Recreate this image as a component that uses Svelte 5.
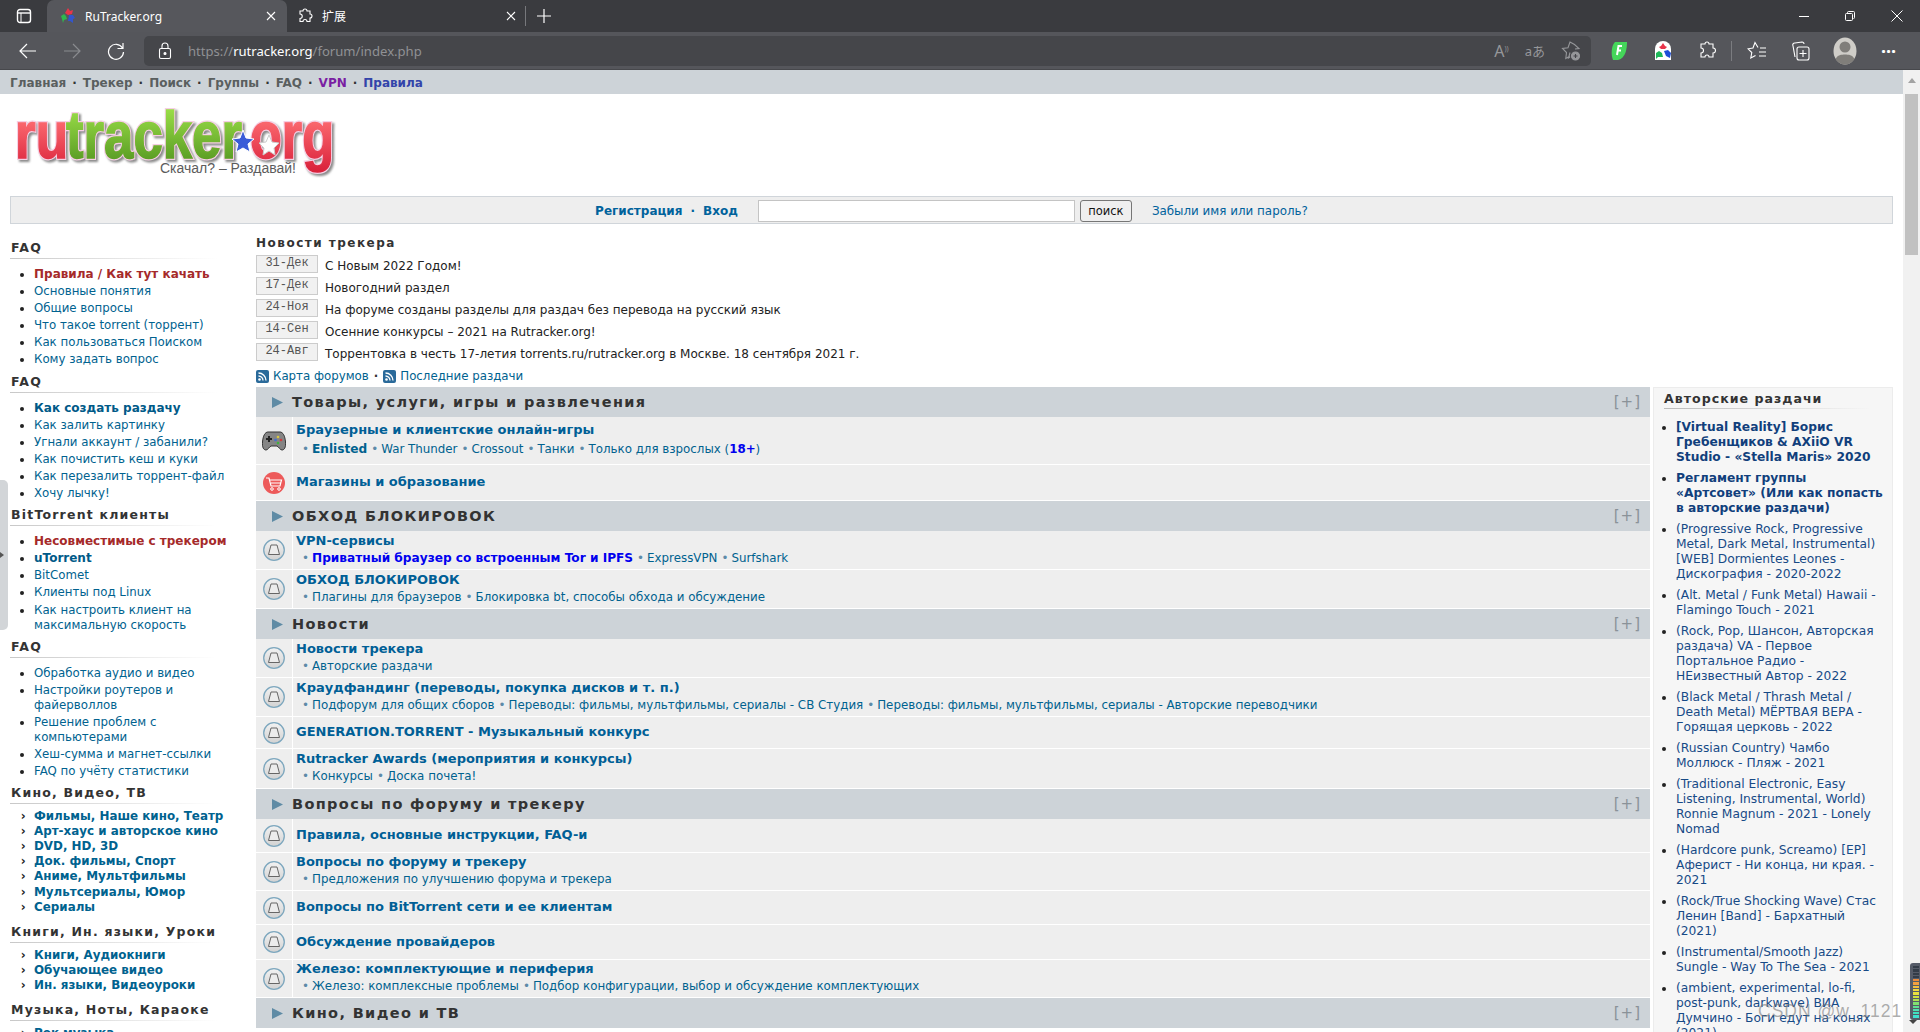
<script>
  const side = [
    { h: 'FAQ', items: [
      { t: 'Правила / Как тут качать', c: 'red' }, { t: 'Основные понятия' }, { t: 'Общие вопросы' },
      { t: 'Что такое torrent (торрент)' }, { t: 'Как пользоваться Поиском' }, { t: 'Кому задать вопрос' } ] },
    { h: 'FAQ', items: [
      { t: 'Как создать раздачу', c: 'b' }, { t: 'Как залить картинку' }, { t: 'Угнали аккаунт / забанили?' },
      { t: 'Как почистить кеш и куки' }, { t: 'Как перезалить торрент-файл' }, { t: 'Хочу лычку!' } ] },
    { h: 'BitTorrent клиенты', items: [
      { t: 'Несовместимые с трекером', c: 'red' }, { t: 'uTorrent', c: 'b' }, { t: 'BitComet' },
      { t: 'Клиенты под Linux' }, { t: 'Как настроить клиент на\nмаксимальную скорость' } ] },
    { h: 'FAQ', items: [
      { t: 'Обработка аудио и видео' }, { t: 'Настройки роутеров и\nфайерволлов' }, { t: 'Решение проблем с\nкомпьютерами' },
      { t: 'Хеш-сумма и магнет-ссылки' }, { t: 'FAQ по учёту статистики' } ] },
    { h: 'Кино, Видео, ТВ', cat: true, items: ['Фильмы, Наше кино, Театр', 'Арт-хаус и авторское кино', 'DVD, HD, 3D', 'Док. фильмы, Спорт', 'Аниме, Мультфильмы', 'Мультсериалы, Юмор', 'Сериалы'].map(t => ({ t })) },
    { h: 'Книги, Ин. языки, Уроки', cat: true, items: ['Книги, Аудиокниги', 'Обучающее видео', 'Ин. языки, Видеоуроки'].map(t => ({ t })) },
    { h: 'Музыка, Ноты, Караоке', cat: true, items: ['Рок музыка'].map(t => ({ t })) }
  ];

  const news = [
    ['31-Дек', 'С Новым 2022 Годом!'], ['17-Дек', 'Новогодний раздел'],
    ['24-Ноя', 'На форуме созданы разделы для раздач без перевода на русский язык'],
    ['14-Сен', 'Осенние конкурсы – 2021 на Rutracker.org!'],
    ['24-Авг', 'Торрентовка в честь 17-летия torrents.ru/rutracker.org в Москве. 18 сентября 2021 г.']
  ];

  const cats = [
    { h: 'Товары, услуги, игры и развлечения', rows: [
      { i: 'game', t: 'Браузерные и клиентские онлайн-игры', h: 47, g: 1, s: [{ t: 'Enlisted', b: 1 }, { t: 'War Thunder' }, { t: 'Crossout' }, { t: 'Танки' }, { t: 'Только для взрослых (', x: '18+' }] },
      { i: 'cart', t: 'Магазины и образование', h: 35 } ] },
    { h: 'ОБХОД БЛОКИРОВОК', rows: [
      { t: 'VPN-сервисы', h: 38, s: [{ t: 'Приватный браузер со встроенным Tor и IPFS', v: 1 }, { t: 'ExpressVPN' }, { t: 'Surfshark' }] },
      { t: 'ОБХОД БЛОКИРОВОК', h: 38, s: [{ t: 'Плагины для браузеров' }, { t: 'Блокировка bt, способы обхода и обсуждение' }] } ] },
    { h: 'Новости', rows: [
      { t: 'Новости трекера', h: 38, s: [{ t: 'Авторские раздачи' }] },
      { t: 'Краудфандинг (переводы, покупка дисков и т. п.)', h: 38, s: [{ t: 'Подфорум для общих сборов' }, { t: 'Переводы: фильмы, мультфильмы, сериалы - СВ Студия' }, { t: 'Переводы: фильмы, мультфильмы, сериалы - Авторские переводчики' }] },
      { t: 'GENERATION.TORRENT - Музыкальный конкурс', h: 31 },
      { t: 'Rutracker Awards (мероприятия и конкурсы)', h: 39, s: [{ t: 'Конкурсы' }, { t: 'Доска почета!' }] } ] },
    { h: 'Вопросы по форуму и трекеру', rows: [
      { t: 'Правила, основные инструкции, FAQ-и', h: 33 },
      { t: 'Вопросы по форуму и трекеру', h: 37, s: [{ t: 'Предложения по улучшению форума и трекера' }] },
      { t: 'Вопросы по BitTorrent сети и ее клиентам', h: 33 },
      { t: 'Обсуждение провайдеров', h: 34 },
      { t: 'Железо: комплектующие и периферия', h: 37, s: [{ t: 'Железо: комплексные проблемы' }, { t: 'Подбор конфигурации, выбор и обсуждение комплектующих' }] } ] },
    { h: 'Кино, Видео и ТВ', rows: [] }
  ];

  const authors = [
    { b: 1, t: '[Virtual Reality] Борис\nГребенщиков & AXiiO VR\nStudio - «Stella Maris» 2020' },
    { b: 1, t: 'Регламент группы\n«Артсовет» (Или как попасть\nв авторские раздачи)' },
    { t: '(Progressive Rock, Progressive\nMetal, Dark Metal, Instrumental)\n[WEB] Dormientes Leones -\nДискография - 2020-2022' },
    { t: '(Alt. Metal / Funk Metal) Hawaii -\nFlamingo Touch - 2021' },
    { t: '(Rock, Pop, Шансон, Авторская\nраздача) VA - Первое\nПортальное Радио -\nНЕизвестный Автор - 2022' },
    { t: '(Black Metal / Thrash Metal /\nDeath Metal) МЁРТВАЯ ВЕРА -\nГорящая церковь - 2022' },
    { t: '(Russian Country) Чамбо\nМоллюск - Пляж - 2021' },
    { t: '(Traditional Electronic, Easy\nListening, Instrumental, World)\nRonnie Magnum - 2021 - Lonely\nNomad' },
    { t: '(Hardcore punk, Screamo) [EP]\nАферист - Ни конца, ни края. -\n2021' },
    { t: '(Rock/True Shocking Wave) Стас\nЛенин [Band] - Бархатный\n(2021)' },
    { t: '(Instrumental/Smooth Jazz)\nSungle - Way To The Sea - 2021' },
    { t: '(ambient, experimental, lo-fi,\npost-punk, darkwave) ВИА\nДумчино - Боги едут на конях\n(2021)' }
  ];
  const meter = ['#333c48','#333c48','#333c48','#333c48','#e98a3c','#f0a040','#f0c040','#f0d840','#e8e040','#d0e040','#b0e050','#80e070','#60e090','#50e0b0','#40e0c0','#40e0d0'];
</script>

<div class="screen">
  <header class="chrome">
    <div class="tabs">
      <svg class="tabmenu" width="16" height="16" viewBox="0 0 16 16" fill="none" stroke="#fff" stroke-width="1.4"><rect x="1.500" y="1.500" width="13" height="13" rx="2.500"/><path d="M1.500 5h13" /><path d="M5 5v9" stroke-width="1"/></svg>
      <div class="tab active">
        <svg width="16" height="16" viewBox="0 0 16 16"><path d="M8 0l2 3 3-1-1 4-4 1-3-2z" fill="#e8344a"/><path d="M1 8l3-2 2 2 1 3-3 1-1 3-1-4z" fill="#2fb84d"/><path d="M9 7l4 0 2 3-2 1 0 4-3-2-2 0z" fill="#3355cc"/></svg>
        <span class="tabtitle">RuTracker.org</span>
        <svg class="x" width="10" height="10" viewBox="0 0 10 10" stroke="#fff" stroke-width="1.1"><path d="M1 1l8 8M9 1l-8 8"/></svg>
      </div>
      <div class="tab">
        <svg width="16" height="16" viewBox="0 0 16 16" fill="none" stroke="#fff" stroke-width="1.1"><path d="M6 3a2 2 0 0 1 4 0h3v3a2 2 0 0 1 0 4v3.500h-3a2 2 0 0 0-4 0H3v-3a2 2 0 0 0 0-4.500V3z"/></svg>
        <span class="tabtitle cjk">扩展</span>
        <svg class="x" width="10" height="10" viewBox="0 0 10 10" stroke="#fff" stroke-width="1.1"><path d="M1 1l8 8M9 1l-8 8"/></svg>
      </div>
      <span class="tabsep"></span>
      <svg width="14" height="14" viewBox="0 0 14 14" stroke="#fff" stroke-width="1.2"><path d="M7 0v14M0 7h14"/></svg>
      <div class="winctl">
        <svg width="10" height="10" viewBox="0 0 10 10" stroke="#fff"><path d="M0 5.500h10"/></svg>
        <svg width="10" height="10" viewBox="0 0 10 10" stroke="#fff" fill="none"><rect x=".5" y="2.500" width="7" height="7" rx="1"/><path d="M2.500 2.500V1.500a1 1 0 0 1 1-1h5a1 1 0 0 1 1 1v5a1 1 0 0 1-1 1"/></svg>
        <svg width="12" height="12" viewBox="0 0 12 12" stroke="#fff"><path d="M.5.500l11 11M11.500.500l-11 11"/></svg>
      </div>
    </div>
    <div class="toolbar">
      <div class="navbtns">
        <svg width="18" height="18" viewBox="0 0 18 18" fill="none" stroke="#fff" stroke-width="1.2"><path d="M17 9H1M8 2L1 9l7 7"/></svg>
        <svg width="18" height="18" viewBox="0 0 18 18" fill="none" stroke="#8a8b8f" stroke-width="1.2"><path d="M1 9h16M10 2l7 7-7 7"/></svg>
        <svg width="18" height="18" viewBox="0 0 18 18" fill="none" stroke="#fff" stroke-width="1.2"><path d="M15.500 6A7.500 7.500 0 1 0 16.500 10M16 1v5.500h-5.500"/></svg>
      </div>
      <div class="address">
        <svg width="14" height="18" viewBox="0 0 14 18" fill="none" stroke="#fff" stroke-width="1.100"><rect x="1.500" y="6.500" width="11" height="10" rx="1.500"/><path d="M4 6.500V4a3 3 0 0 1 6 0v2.500"/><circle cx="7" cy="11.500" r="1" fill="#fff"/></svg>
        <span class="url"><span class="dim">https://</span>rutracker.org<span class="dim">/forum/index.php</span></span>
        <div class="addr-icons">
          <span class="readaloud">A<small>))</small></span>
          <span class="translate">aあ</span>
          <svg width="20" height="20" viewBox="0 0 20 20" fill="none" stroke="#96979a" stroke-width="1.100"><path d="M9 11.500L7.500 17 9 16M14 8l4-.5-4.500-4L9 1 7 6.800 1.500 7.500 5.500 11.500 4.800 17.500 9 15"/><circle cx="14.500" cy="15" r="4" fill="#96979a"/><path d="M14.500 13v4M12.500 15h4" stroke="#45464a"/></svg>
        </div>
      </div>
      <div class="extbar">
        <svg class="ext" width="18" height="20" viewBox="0 0 18 20"><path d="M5 1h12c0 6-1 16-9 18H3C1 14 1 5 5 1z" fill="#45d65a"/><path d="M12 5H8.500L7 14M7 9.500h4" stroke="#fff" stroke-width="2" fill="none"/></svg>
        <svg class="ext" width="18" height="20" viewBox="0 0 18 20"><path d="M1 8a8 8 0 0 1 16 0v11H1z" fill="#fff"/><path d="M9 2l2 3 2 1-2 2H7L5 6l2-1z" fill="#e8344a"/><path d="M2 12l3-2 3 2 1 4H4l-2 2z" fill="#1fb85a"/><path d="M10 10l4-1 3 3-1 5-4-2z" fill="#1d4ed8"/></svg>
        <svg width="18" height="20" viewBox="0 0 18 20" fill="none" stroke="#fff" stroke-width="1.100"><path d="M7 3a2 2 0 0 1 4 0h4v4a2.500 2.500 0 0 1 0 5v4h-4a2 2 0 0 0-4 0H3v-4a2.500 2.500 0 0 0 0-5V3z"/></svg>
        <span class="vsep"></span>
        <svg class="fav" width="20" height="20" viewBox="0 0 20 20" fill="none" stroke="#fff" stroke-width="1.100"><path d="M11 6.500L8 1.500 6 7 1 7.800l3.800 3.700-1 5.500 4.700-2.500M13 7h6M12 11h7M12 15h7"/></svg>
        <svg class="coll" width="20" height="20" viewBox="0 0 20 20" fill="none" stroke="#fff" stroke-width="1.100"><rect x="7" y="6" width="12" height="13" rx="2"/><path d="M13 9v7M9.500 12.500h7M5 16L3 5a2 2 0 0 1 2-3l7-1a2 2 0 0 1 2 2"/></svg>
        <svg class="avatar" width="24" height="28" viewBox="0 0 24 28"><ellipse cx="12" cy="14" rx="11.500" ry="13.500" fill="#cfcdc8"/><circle cx="12" cy="10" r="5.500" fill="#807e7a"/><path d="M2.500 22c2-4 6-4.500 9.500-4.500s7.500.5 9.500 4.500c-2 3.500-5.500 5.500-9.500 5.500s-7.500-2-9.500-5.500z" fill="#807e7a"/></svg>
        <span class="dots">···</span>
      </div>
    </div>
  </header>

  <div class="viewport">
    <main class="page">
      <nav class="topnav">
        <span>Главная</span><i>·</i><span>Трекер</span><i>·</i><span>Поиск</span><i>·</i><span>Группы</span><i>·</i><span>FAQ</span><i>·</i><span class="vpn">VPN</span><i>·</i><span class="rules">Правила</span>
      </nav>

      <div class="logo">
        <svg width="340" height="76" viewBox="0 0 340 76">
          <defs>
            <linearGradient id="lr" x1="0" y1="0" x2="0" y2="1"><stop offset="0.35" stop-color="#f9656c"/><stop offset="1" stop-color="#d9203a"/></linearGradient>
            <linearGradient id="lg" x1="0" y1="0" x2="0" y2="1"><stop offset="0" stop-color="#a8ec50"/><stop offset="1" stop-color="#4d8f1c"/></linearGradient>
          </defs>
          <g class="logotext halo">
            <text x="15" y="52" textLength="53" lengthAdjust="spacingAndGlyphs">ru</text>
            <text x="66" y="52" textLength="176" lengthAdjust="spacingAndGlyphs">tracker</text>
            <text x="250" y="52" textLength="84" lengthAdjust="spacingAndGlyphs">org</text>
          </g>
          <g class="logotext">
            <text x="15" y="52" textLength="53" lengthAdjust="spacingAndGlyphs" fill="url(#lr)" stroke="url(#lr)">ru</text>
            <text x="66" y="52" textLength="176" lengthAdjust="spacingAndGlyphs" fill="url(#lg)" stroke="url(#lg)">tracker</text>
            <text x="250" y="52" textLength="84" lengthAdjust="spacingAndGlyphs" fill="url(#lr)" stroke="url(#lr)">org</text>
          </g>
          <polygon points="243,24 246,32 254,33 248,38 250,46 243,42 236,46 238,38 232,33 240,32" fill="#3a5cd8" stroke="#fff"/>
          <polygon points="269,29 272,36 279,37 274,42 275,49 269,45 263,49 264,42 259,37 266,36" fill="#fff" stroke="#ccc"/>
          <text class="tagline" x="160" y="67">Скачал? – Раздавай!</text>
        </svg>
      </div>

      <div class="loginbar">
        <b class="reg">Регистрация</b><i class="ldot">·</i><b class="reg">Вход</b>
        <input class="search" type="text" />
        <button class="go">поиск</button>
        <span class="forgot">Забыли имя или пароль?</span>
      </div>

      <div class="columns">
        <aside class="sidebar">
          {#each side as s}
            <section class="sblock" class:cat={s.cat}>
              <h3>{s.h}</h3>
              <ul>
                {#each s.items as it}
                  <li class={it.c || ''}>{it.t}</li>
                {/each}
              </ul>
            </section>
          {/each}
        </aside>

        <div class="center">
          <div class="newstitle">Новости трекера</div>
          <div class="news">
            {#each news as n}
              <div class="newsrow"><span class="date">{n[0]}</span><span class="ntext">{n[1]}</span></div>
            {/each}
          </div>
          <div class="feeds">
            <svg width="13" height="13" viewBox="0 0 13 13"><rect width="13" height="13" rx="2" fill="#2a6a9a"/><circle cx="3.500" cy="9.500" r="1.300" fill="#fff"/><path d="M2.500 6a4.500 4.500 0 0 1 4.500 4.500M2.500 3a7.500 7.500 0 0 1 7.500 7.500" stroke="#fff" stroke-width="1.300" fill="none"/></svg>
            <span>Карта форумов</span>
            <i>·</i>
            <svg width="13" height="13" viewBox="0 0 13 13"><rect width="13" height="13" rx="2" fill="#2a6a9a"/><circle cx="3.500" cy="9.500" r="1.300" fill="#fff"/><path d="M2.500 6a4.500 4.500 0 0 1 4.500 4.500M2.500 3a7.500 7.500 0 0 1 7.500 7.500" stroke="#fff" stroke-width="1.300" fill="none"/></svg>
            <span>Последние раздачи</span>
          </div>

          <div class="forumwrap">
            <div class="forums">
              {#each cats as c}
                <div class="cathead">
                  <svg width="11" height="11" viewBox="0 0 11 11"><path d="M0 0l11 5.500L0 11z" fill="#5f8ba5"/></svg>
                  <span class="catname">{c.h}</span>
                  <span class="plus">[+]</span>
                </div>
                {#each c.rows as r}
                  <div class="row" style="min-height:{r.h}px">
                    <div class="ico">
                      {#if r.i === 'game'}
                        <svg width="24" height="20" viewBox="0 0 24 20"><path d="M6 1h12c3 0 5 4 5.500 10 .5 5-1 8-3.500 8-2 0-3-3-5-4H9c-2 1-3 4-5 4-2.500 0-4-3-3.500-8C1 5 3 1 6 1z" fill="#858585" stroke="#333"/><path d="M7 5v6M4 8h6" stroke="#222" stroke-width="2"/><circle cx="16" cy="6" r="1.300" fill="#d8c840"/><circle cx="19" cy="9" r="1.300" fill="#d04040"/><circle cx="13.500" cy="9" r="1.300" fill="#4070d0"/><circle cx="16" cy="12" r="1.300" fill="#40b040"/></svg>
                      {:else if r.i === 'cart'}
                        <svg width="22" height="22" viewBox="0 0 22 22"><circle cx="11" cy="11" r="11" fill="#ed5a5a"/><path d="M3 6h3l2 8h9l1.500-6H6.500M8 11h10" fill="none" stroke="#fff" stroke-width="1.200"/><circle cx="9" cy="17" r="1.300" fill="none" stroke="#fff"/><circle cx="16" cy="17" r="1.300" fill="none" stroke="#fff"/></svg>
                      {:else}
                        <svg width="22" height="22" viewBox="0 0 22 22"><defs><linearGradient id="fi" x1="0" y1="0" x2="0" y2="1"><stop offset="0" stop-color="#f2f2f2"/><stop offset="1" stop-color="#d2d2d2"/></linearGradient></defs><circle cx="11" cy="11" r="10.300" fill="url(#fi)" stroke="#7da7be" stroke-width="1.300"/><path d="M8 6h6l2.500 9.500h-11z" fill="#ececec" stroke="#666" stroke-width="1" stroke-linejoin="round"/></svg>
                      {/if}
                    </div>
                    <div class="rowbody" class:wide={r.g}>
                      <div class="rtitle">{r.t}</div>
                      {#if r.s}
                        <div class="rsub">
                          {#each r.s as l}
                            <span class="bul">•</span><span class:sb={l.b} class:sv={l.v}>{l.t}{#if l.x}<b class="plus18">{l.x}</b>){/if}</span>
                          {/each}
                        </div>
                      {/if}
                    </div>
                  </div>
                {/each}
              {/each}
            </div>
            <aside class="authors">
              <h4>Авторские раздачи</h4>
              <ul>
                {#each authors as a}
                  <li class:bold={a.b}>{a.t}</li>
                {/each}
              </ul>
            </aside>
          </div>
        </div>
      </div>
    </main>

    <div class="scrollbar">
      <span class="arrow"></span>
      <span class="thumb"></span>
    </div>

    <div class="handle"><span></span></div>
    <div class="watermark">CSDN @w_1121</div>
    <div class="meter">
      {#each meter as m}<span style="background:{m}"></span>{/each}
    </div>
  </div>
</div>

<style>
  :global(body) { margin: 0; background: #fff; }
  .screen { width: 1920px; height: 1032px; overflow: hidden; display: flex; flex-direction: column; font-family: "DejaVu Sans", sans-serif; }

  .chrome { height: 70px; flex: none; background: #55565b; font-family: "Noto Sans", "Noto Sans CJK SC", sans-serif; color: #fff; }
  .tabs { height: 32px; background: #3a3b3f; display: flex; align-items: center; }
  .tabmenu { margin: 0 15px 0 16px; }
  .tab { width: 240px; height: 32px; box-sizing: border-box; display: flex; align-items: center; padding: 0 11px 0 13px; gap: 9px; border-radius: 7px 7px 0 0; }
  .tab.active { background: #56575c; }
  .tab + .tab { padding-left: 10px; }
  .tabtitle { flex: 1; font-size: 12px; }
  .tabsep { width: 1px; height: 20px; background: #77787c; margin: 0 11px 0 -2px; }
  .winctl { margin-left: auto; display: flex; align-items: center; gap: 36px; padding-right: 17px; }
  .toolbar { height: 38px; display: flex; align-items: center; border-bottom: 1px solid #47484c; box-sizing: border-box; }
  .navbtns { width: 144px; flex: none; display: flex; gap: 26px; padding-left: 19px; box-sizing: border-box; }
  .address { width: 1447px; height: 30px; flex: none; background: #45464a; border-radius: 5px; display: flex; align-items: center; padding: 0 10px 0 14px; box-sizing: border-box; }
  .url { font-size: 13.100px; margin-left: 16px; color: #fff; }
  .dim { color: #909194; }
  .addr-icons { margin-left: auto; display: flex; align-items: center; gap: 16px; color: #96979a; font-size: 16px; }
  .readaloud small { font-size: 7px; vertical-align: 6px; }
  .translate { font-size: 13px; }
  .extbar { flex: 1; display: flex; align-items: center; padding-left: 19px; gap: 24px; }
  .ext { margin-right: 2px; }
  .vsep { width: 1px; height: 20px; background: #7b7c80; margin: 0 -9px; }
  .fav { margin-right: -1px; }
  .coll { margin-right: -1px; }
  .dots { font-size: 18px; font-weight: 700; }

  .viewport { flex: 1; position: relative; display: flex; min-height: 0; overflow: hidden; }
  .page { flex: 1; min-width: 0; overflow: hidden; }
  .scrollbar { width: 17px; flex: none; background: #f1f1f1; display: flex; flex-direction: column; align-items: center; }
  .arrow { margin-top: 8px; border: 4px solid transparent; border-top: 0; border-bottom: 5px solid #a3a3a3; }
  .thumb { width: 13px; height: 161px; margin-top: 11px; background: #c1c1c1; }

  .topnav { height: 24px; box-sizing: border-box; padding: 1px 0 0 10px; background: #cdd3d8; display: flex; align-items: center; font-size: 12px; font-weight: 700; color: #5a5f5f; }
  .topnav i { font-style: normal; margin: 0 6px; color: #333; }
  .vpn { color: #7a1fa2; }
  .rules { color: #3344aa; }

  .logo { height: 102px; box-sizing: border-box; padding: 12px 0 0 0; }
  .logotext { font: 700 67px "Liberation Sans", sans-serif; stroke-width: 1.500; }
  .logotext.halo { fill: #f6cfe4; stroke: #f6cfe4; stroke-width: 4; filter: drop-shadow(2px 2px 1px rgba(60,60,60,.6)); }
  .tagline { font: 14px "Liberation Sans", sans-serif; fill: #5c5c5c; }

  .loginbar { margin: 0 10px; height: 28px; box-sizing: border-box; padding-top: 1px; background: #eee; border: 1px solid #d0d5da; display: flex; align-items: center; justify-content: center; font-size: 12px; color: #00629c; }
  .reg { font-weight: 700; }
  .ldot { font-style: normal; margin: 0 8px; font-weight: 700; }
  .search { width: 317px; height: 22px; box-sizing: border-box; border: 1px solid #c4c4c4; background: #fff; margin: 0 5px 0 20px; padding: 0; }
  .go { width: 52px; height: 22px; box-sizing: border-box; border: 1px solid #767676; border-radius: 3px; background: #efefef; font: 11.500px "DejaVu Sans", sans-serif; color: #111; padding: 0; }
  .forgot { margin-left: 20px; font-size: 11.900px; }

  .columns { display: flex; padding: 0 10px; }
  .sidebar { width: 230px; flex: none; margin-right: 16px; font-size: 11.800px; padding-top: 15px; }
  .sblock h3 { margin: 0; font-size: 12.500px; font-weight: 700; letter-spacing: 1.200px; color: #333; line-height: 18px; padding: 0 0 2px 1px; background: linear-gradient(90deg, #c8c8c8, #fff 90%) no-repeat left bottom / 100% 1px; }
  .sblock ul { margin: 8px 0 5.100px; padding: 0 0 0 24px; }
  .sblock li { line-height: 15px; margin-bottom: 2.100px; color: #00628f; white-space: pre-line; }
  .sblock li::marker { color: #222; }
  .sblock li.red { color: #a52a2a; font-weight: 700; font-size: 12px; }
  .sblock li.b { color: #005a88; font-weight: 700; font-size: 12px; }
  .sblock.cat li { font-weight: 700; font-size: 11.900px; margin: 0; line-height: 15.100px; list-style-type: "›  "; }
  .sblock.cat ul { margin-top: 5px; margin-bottom: 8.100px; }

  .center { flex: 1; min-width: 0; padding-top: 11px; }
  .newstitle { font-size: 12px; font-weight: 700; letter-spacing: 1.500px; color: #333; line-height: 16px; }
  .news { margin-top: 4px; display: flex; flex-direction: column; gap: 4px; }
  .newsrow { display: flex; align-items: center; height: 18px; font-size: 12px; color: #222; }
  .date { width: 62px; height: 18px; box-sizing: border-box; border: 1px solid #ccc; background: #f1f1f1; font: 12px "Liberation Mono", monospace; color: #555; text-align: center; line-height: 15px; margin-right: 7px; flex: none; }
  .ntext { position: relative; top: 1.500px; }
  .feeds { display: flex; align-items: center; gap: 4px; font-size: 11.800px; color: #00628f; margin-top: 6px; height: 18px; }
  .feeds i { font-style: normal; margin: 0 1px; color: #333; font-weight: 700; }

  .forumwrap { display: flex; margin-top: 2px; gap: 3px; align-items: flex-start; }
  .forums { width: 1394px; flex: none; }
  .cathead { height: 30px; background: #cdd3d8; display: flex; align-items: center; padding: 0 9px 0 16px; }
  .catname { margin-left: 9px; font-size: 14.500px; font-weight: 700; letter-spacing: 1.360px; color: #333; }
  .plus { margin-left: auto; font: 15px "DejaVu Sans", sans-serif; color: #8a9298; letter-spacing: 1px; }
  .row { display: flex; background: #eee; border-bottom: 1px solid #fff; }
  .ico { width: 36px; flex: none; border-right: 1px solid #fff; display: flex; align-items: center; justify-content: center; }
  .rowbody { flex: 1; padding: 0 0 2px 3px; display: flex; flex-direction: column; justify-content: center; gap: 3px; }
  .rowbody.wide { gap: 5px; }
  .rtitle { font-size: 13px; font-weight: 700; color: #005f96; line-height: 15px; }
  .rsub { font-size: 11.850px; color: #00628f; line-height: 15px; padding-left: 6px; white-space: nowrap; display: flex; }
  .bul { color: #5d8aa8; margin-right: 3px; }
  .rsub span:not(.bul) { margin-right: 4px; }
  .rsub .sb, .rsub .sv { font-size: 12.150px; font-weight: 700; }
  .rsub .sv { color: #0000ee; }
  .plus18 { color: #0000ee; }

  .authors { width: 240px; height: 1000px; flex: none; box-sizing: border-box; background: #f6f6f6; border: 1px solid #ececec; padding: 0 3px 0 10px; font-size: 12.250px; color: #174a86; }
  .authors h4 { margin: 0; font-size: 12.600px; letter-spacing: 1px; font-weight: 700; color: #333; line-height: 21px; background: linear-gradient(90deg, #bbb, #f6f6f6 92%) no-repeat left bottom / 100% 1px; }
  .authors ul { margin: 11px 0 0; padding: 0 0 0 12px; }
  .authors li { line-height: 15px; margin-bottom: 6px; white-space: pre; color: #174a86; }
  .authors li::marker { color: #222; }
  .authors li.bold { font-weight: 700; color: #113f7c; }

  .handle { position: absolute; left: 0; top: 410px; width: 8px; height: 150px; background: #d2d5d8; border-radius: 0 5px 5px 0; display: flex; align-items: center; }
  .handle span { border: 3px solid transparent; border-left: 4px solid #555; }
  .watermark { position: absolute; left: 1758px; top: 931px; white-space: nowrap; font: 17.500px "Liberation Sans", sans-serif; color: rgba(120,120,120,.6); letter-spacing: 1px; }
  .meter { position: absolute; right: 0; top: 893px; width: 10px; height: 57px; background: #555b68; border-radius: 3px 0 0 3px; display: flex; flex-direction: column; gap: 1px; padding: 3px 0 0 3px; box-sizing: border-box; }
  .meter::after { content: ""; position: absolute; left: -1px; bottom: -4px; border: 4px solid transparent; border-bottom: 0; border-top: 4px solid #444; }
  .meter span { height: 2.300px; width: 6px; flex: none; }
</style>
